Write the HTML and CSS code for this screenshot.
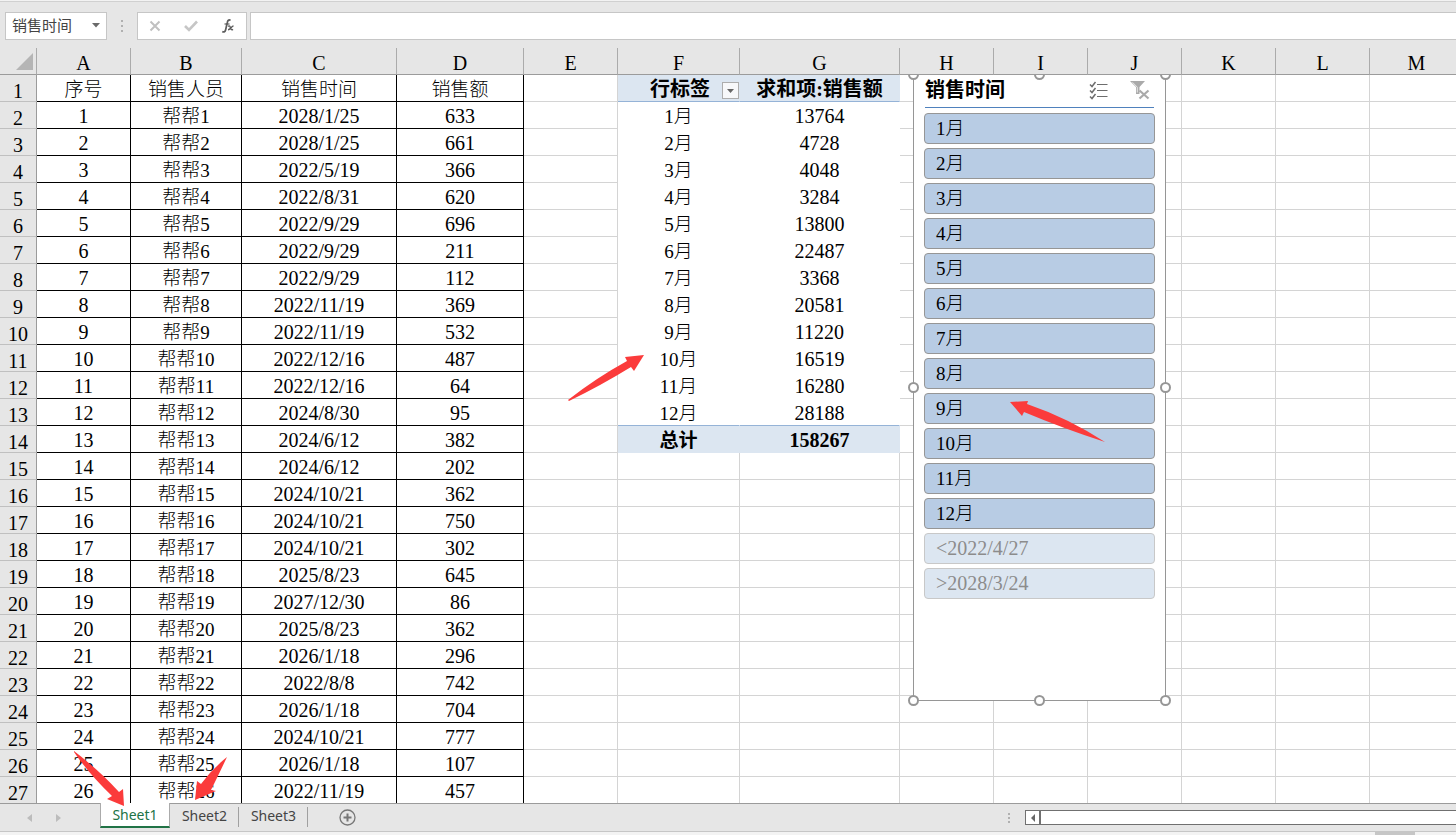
FILE: index.html
```html
<!DOCTYPE html>
<html lang="zh-CN">
<head>
<meta charset="utf-8">
<title>销售时间</title>
<link rel="stylesheet" href="styles.css">
</head>
<body>
<header class="formula-bar">
  <div class="name-box">
    <input class="name-input" aria-label="名称框" value="销售时间">
    <button class="name-drop" aria-label="展开"><svg width="8" height="5"><path d="M0 0H8L4 4.500Z" fill="#6a6a6a"/></svg></button>
  </div>
  <svg class="grip" width="2" height="12"><path d="M0 0h2v2H0zM0 5h2v2H0zM0 10h2v2H0z" fill="#b0b0b0"/></svg>
  <div class="formula-tools">
    <button aria-label="取消"><svg width="12" height="12"><path d="M1.500 1.500L10.500 10.500M10.500 1.500L1.500 10.500" stroke="#c0c0c0" stroke-width="2" fill="none"/></svg></button>
    <button aria-label="输入"><svg width="14" height="12"><path d="M1 6L5 10L13 1.500" stroke="#c6c6c6" stroke-width="2.600" fill="none"/></svg></button>
    <button aria-label="插入函数"><svg width="14" height="14" fill="none" stroke="#5c5c5c"><path d="M9.500 1.500C7.800.2 6.700 1.400 6.300 3.500L4.700 10.500C4.300 12.700 3 13.500 1.300 12.500" stroke-width="1.700"/><path d="M3.500 5H8.500" stroke-width="1.200"/><path d="M7 7.300C8.500 6.300 9 7.200 9.400 8.800S10.500 11.300 12 10.300M12.500 7C10.500 7 9.500 10.700 7 10.700" stroke-width="1.400"/></svg></button>
  </div>
  <input class="formula-input" aria-label="编辑栏">
</header>
<main class="sheet">
  <table class="grid">
    <colgroup><col class="w-head"><col class="w-std"><col class="w-b"><col class="w-c"><col class="w-d"><col class="w-std"><col class="w-f"><col class="w-g"><col class="w-std"><col class="w-std"><col class="w-std"><col class="w-std"><col class="w-std"><col class="w-std"></colgroup>
    <thead><tr id="letters"><th class="corner"><svg width="17" height="17"><path d="M17 0V17H0Z" fill="#b5b5b5"/></svg></th></tr></thead>
    <tbody id="rows"></tbody>
  </table>
  <div class="canvas">
    <section class="slicer" aria-label="销售时间">
      <div class="slicer-head">
        <h2>销售时间</h2>
        <button aria-label="多选"><svg width="19" height="19" fill="none" stroke="#6d6d6d"><path d="M1 3.500L3 5.500L6.500 1M1 9.500L3 11.500L6.500 7M1 15.500L3 17.500L6.500 13" stroke-width="1.500"/><path d="M8 3.500H18.500M8 9.500H18.500M8 15.500H18.500" stroke-width="1.200"/></svg></button>
        <button aria-label="清除筛选器"><svg width="20" height="20"><path d="M0 1H15L9.500 7V14H6V7Z" fill="#aaa"/><path d="M2.500 2.300L7.300 7.200V12.500" fill="none" stroke="#e8e8e8"/><path d="M9.500 10.500L18.500 18.500M18.500 10.500L9.500 18.500" stroke="#aaa" stroke-width="2.200"/></svg></button>
      </div>
      <div class="slicer-items" id="slicerItems"></div>
      <i class="handle h-nw"></i><i class="handle h-n"></i><i class="handle h-ne"></i><i class="handle h-w"></i><i class="handle h-e"></i><i class="handle h-sw"></i><i class="handle h-s"></i><i class="handle h-se"></i>
    </section>
  </div>
</main>
<footer class="tab-bar">
  <div class="tab-nav">
    <button aria-label="上一个"><svg width="5" height="8"><path d="M5 0V8L0 4Z" fill="#bcbcbc"/></svg></button>
    <button aria-label="下一个"><svg width="5" height="8"><path d="M0 0V8L5 4Z" fill="#bcbcbc"/></svg></button>
  </div>
  <nav class="tabs">
    <button class="tab active">Sheet1</button>
    <button class="tab">Sheet2</button>
    <button class="tab">Sheet3</button>
  </nav>
  <button class="add" aria-label="新工作表"><svg width="17" height="17" fill="none" stroke="#777"><circle cx="8.500" cy="8.500" r="7.500" stroke-width="1.300"/><path d="M8.500 4.500V12.500M4.500 8.500H12.500" stroke-width="2"/></svg></button>
  <svg class="tab-grip" width="2" height="10"><path d="M0 0h2v2H0zM0 4h2v2H0zM0 8h2v2H0z" fill="#b0b0b0"/></svg>
  <div class="scroll">
    <button aria-label="向左滚动"><svg width="4" height="8"><path d="M4 0V8L0 4Z" fill="#666"/></svg></button>
  </div>
</footer>
<div class="status"><i></i></div>
<svg class="arrows" fill="#fb3b3b" aria-hidden="true">
  <path d="M568 400Q596 378 627 361L625 357L644 355L634 371L631 367Q600 386 569 401Z"/>
  <path d="M1010 402L1028 401L1027 404Q1068 418 1105 442Q1062 428 1024 412L1022 416Z"/>
  <path d="M74 751Q100 771 119 792L123 789L124 806L107 799L112 796Q89 774 74 752Z"/>
  <path d="M227 757Q218 776 211 790L216 791L195 800L197 781L201 784Q212 769 227 757Z"/>
</svg>
<script src="sheet.js"></script>
</body>
</html>
```
FILE: styles.css
```css
* { box-sizing: border-box; }
body {
  margin: 0;
  height: 100vh;
  display: flex;
  flex-direction: column;
  overflow: hidden;
  background: #e6e6e6;
  border-top: 1px solid #f2f2f2;
  color: #000;
  font-family: "Liberation Serif", "Noto Sans CJK SC", serif;
}
button { padding: 0; border: 0; background: none; font: inherit; color: inherit; display: flex; align-items: center; justify-content: center; }
svg { display: block; }

.formula-bar {
  display: flex;
  align-items: center;
  height: 47px;
  padding: 9px 0 8px 5px;
  border-top: 1px solid #d0d0d0;
  flex: none;
}
.name-box, .formula-tools { display: flex; height: 28px; background: #fff; border: 1px solid #c6c6c6; }
.name-box { width: 102px; }
.name-input {
  width: 80px;
  padding: 0 0 2px 6px;
  border: 0;
  background: none;
  color: #444;
  font: 15px "Noto Sans CJK SC", sans-serif;
}
.name-drop { width: 20px; }
.grip { margin: 0 14px; }
.formula-tools { width: 110px; padding: 0 11px; justify-content: space-between; }
.formula-tools button { margin-right: 0; }
.formula-input { flex: 1; height: 28px; margin-left: 3px; border: 1px solid #c6c6c6; border-right: 0; background: #fff; }

.sheet { flex: 1; min-height: 0; position: relative; overflow: hidden; background: #fff; }
.grid { table-layout: fixed; width: 1464px; border-collapse: separate; border-spacing: 0; }
.w-head { width: 37px; }
.w-std { width: 94px; }
.w-b { width: 111px; }
.w-c { width: 155px; }
.w-d { width: 127px; }
.w-f { width: 122px; }
.w-g { width: 160px; }
.grid th, .grid td {
  height: 27px;
  padding: 3px 0 0;
  border: 0 solid #d4d4d4;
  border-width: 0 1px 1px 0;
  text-align: center;
  font-weight: 300;
  font-size: 20px;
  line-height: 23px;
  white-space: nowrap;
}
.grid thead th { padding-top: 4px; line-height: 22px; background: linear-gradient(#e6e6e6, #e6e6e6); border-color: #9b9b9b; border-right-color: #ababab; }
.grid tbody th { padding-top: 6px; line-height: 20px; background: #e6e6e6; border-color: #c0c0c0; border-right-color: #9b9b9b; }
.grid .corner { padding: 5px 3px 4px 16px; }
.grid .cn { font-size: 19px; }
.grid .data { border-color: #000; }
.grid .pivot { border-color: #fff; }
.grid .pivot-end { border-bottom-color: #95b3d7; }
.grid .pivot-band { background: #dce6f1; border-color: #dce6f1; font-weight: bold; }
.grid .pivot-top { border-bottom-color: #95b3d7; }
.label-cell { display: flex; align-items: center; justify-content: flex-end; gap: 12px; height: 23px; }
.filter { width: 17px; height: 17px; margin-top: 2px; border: 1px solid #adadad; background: #f7f8fa; }

.canvas { position: absolute; inset: 27px 0 0 37px; overflow: hidden; pointer-events: none; }
.slicer {
  position: absolute;
  left: 876px;
  top: -1px;
  width: 253px;
  height: 627px;
  padding: 0 10px;
  background: #fff;
  border: 1px solid #969696;
  pointer-events: auto;
}
.slicer-head { display: flex; align-items: center; height: 33px; padding-bottom: 2px; border-bottom: 1px solid #4f81bd; margin: 0 1px; }
.slicer-head h2 { flex: 1; margin: 0; font-size: 20px; line-height: 30px; }
.slicer-head button { margin-right: 4px; }
.slicer-head button:nth-of-type(1) { margin-right: 22px; }
.slicer-items { display: grid; gap: 4px; padding-top: 5px; }
.slicer-items button {
  height: 31px;
  padding: 0 11px 4px;
  justify-content: flex-start;
  background: #b8cce4;
  border: 1px solid #969696;
  border-radius: 4px;
  font-size: 19px;
  font-weight: 300;
}
.slicer-items .empty { padding-bottom: 0; background: #dce6f1; border-color: #c8c8c8; color: #8c8c8c; font-size: 20px; }
.handle { position: absolute; width: 11px; height: 11px; border: 2px solid #969696; border-radius: 50%; background: #fff; }
.h-nw, .h-n, .h-ne { top: -6px; }
.h-w, .h-e { top: 307px; }
.h-sw, .h-s, .h-se { bottom: -6px; }
.h-nw, .h-w, .h-sw { left: -6px; }
.h-n, .h-s { left: 120px; }
.h-ne, .h-e, .h-se { right: -6px; }

.tab-bar { flex: none; display: flex; align-items: center; height: 28px; border-top: 1px solid #9b9b9b; font: 14px "Noto Sans", sans-serif; color: #444; }
.tab-nav { width: 100px; padding-left: 27px; display: flex; gap: 24px; }
.tabs { display: flex; align-items: flex-start; height: 28px; margin-top: -1px; }
.tab { width: 69px; height: 24px; position: relative; }
.tab + .tab::after { content: ""; position: absolute; right: 0; top: 4px; width: 1px; height: 20px; background: #a0a0a0; }
.tab.active { width: 70px; height: 25px; background: #fff; color: #217346; border: 1px solid #ababab; border-top: 0; border-bottom: 2px solid #217346; }
.add { margin-left: 31px; }
.tab-grip { margin-left: auto; margin-right: 15px; }
.scroll { width: 431px; height: 15px; background: #fff; border: 1px solid #707070; border-right: 0; }
.scroll button { width: 15px; height: 13px; border-right: 2px solid #707070; }
.status { flex: none; height: 4px; background: #f3f3f3; border-top: 1px solid #c6c6c6; }
.status i { display: block; width: 40px; height: 3px; margin-left: auto; margin-right: 41px; background: #c6c6c6; }
.arrows { position: absolute; left: 0; top: 0; width: 100%; height: 100%; pointer-events: none; }
```
FILE: sheet.js
```js
const sales = [
  ["2028/1/25", 633], ["2028/1/25", 661], ["2022/5/19", 366], ["2022/8/31", 620],
  ["2022/9/29", 696], ["2022/9/29", 211], ["2022/9/29", 112], ["2022/11/19", 369],
  ["2022/11/19", 532], ["2022/12/16", 487], ["2022/12/16", 64], ["2024/8/30", 95],
  ["2024/6/12", 382], ["2024/6/12", 202], ["2024/10/21", 362], ["2024/10/21", 750],
  ["2024/10/21", 302], ["2025/8/23", 645], ["2027/12/30", 86], ["2025/8/23", 362],
  ["2026/1/18", 296], ["2022/8/8", 742], ["2026/1/18", 704], ["2024/10/21", 777],
  ["2026/1/18", 107], ["2022/11/19", 457]
];
const totals = [13764, 4728, 4048, 3284, 13800, 22487, 3368, 20581, 11220, 16519, 16280, 28188];

const td = (text, cls = "") => `<td class="${cls}">${text}</td>`;

function pivotCells(row) {
  if (row === 1) {
    const arrow = '<svg width="7" height="4"><path d="M0 0H7L3.5 4Z" fill="#666"/></svg>';
    return td(`<div class="label-cell">行标签<button class="filter" aria-label="筛选">${arrow}</button></div>`, "pivot-band pivot-top") +
      td("求和项:销售额", "pivot-band pivot-top");
  }
  if (row <= 13) {
    const end = row === 13 ? " pivot-end" : "";
    return td(`${row - 1}月`, "cn pivot" + end) + td(totals[row - 2], "pivot" + end);
  }
  if (row === 14) return td("总计", "cn pivot-band") + td("158267", "pivot-band");
  return td("") + td("");
}

document.getElementById("letters").insertAdjacentHTML("beforeend",
  [..."ABCDEFGHIJKLM"].map(c => `<th>${c}</th>`).join(""));

let html = "";
for (let r = 1; r <= 27; r++) {
  html += `<tr><th>${r}</th>`;
  if (r === 1) {
    html += ["序号", "销售人员", "销售时间", "销售额"].map(t => td(t, "cn data")).join("");
  } else {
    const [date, amount] = sales[r - 2];
    html += td(r - 1, "data") + td(`帮帮${r - 1}`, "cn data") + td(date, "data") + td(amount, "data");
  }
  html += td("") + pivotCells(r) + td("").repeat(6) + "</tr>";
}
document.getElementById("rows").innerHTML = html;

document.getElementById("slicerItems").innerHTML =
  totals.map((_, i) => `<button>${i + 1}月</button>`).join("") +
  '<button class="empty">&lt;2022/4/27</button><button class="empty">&gt;2028/3/24</button>';
```
